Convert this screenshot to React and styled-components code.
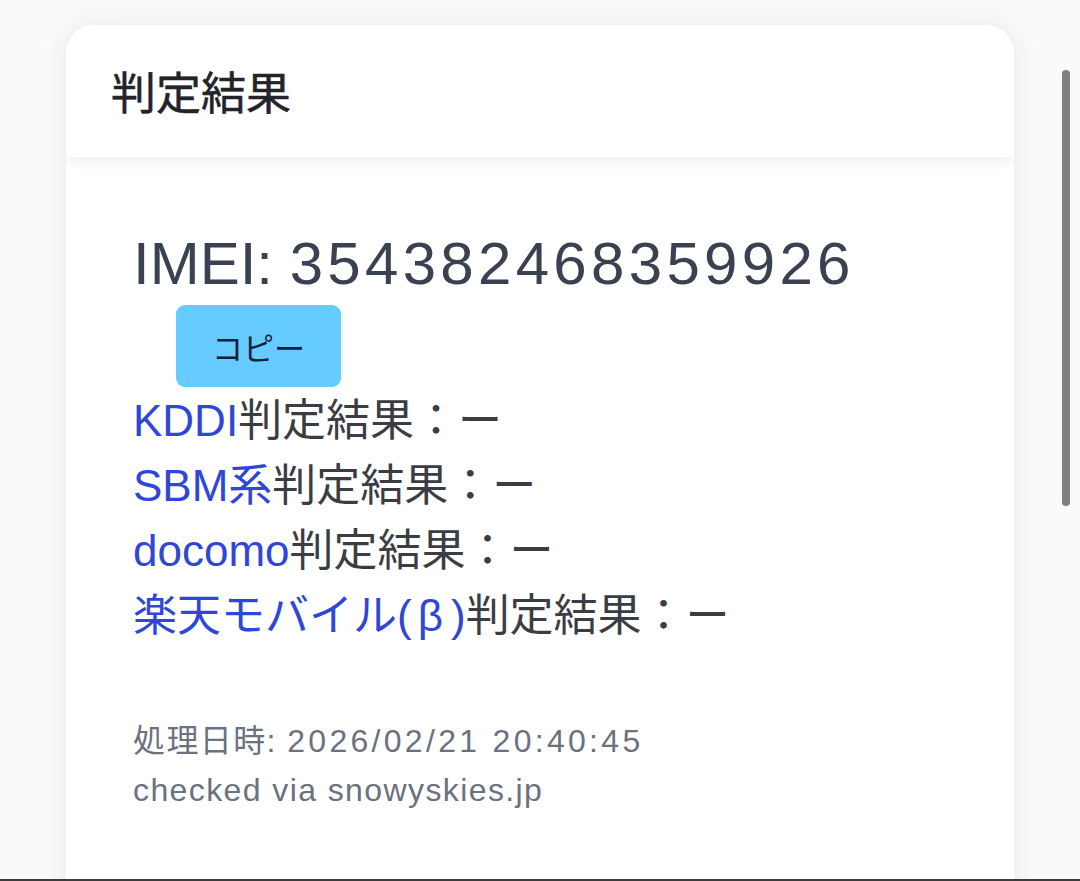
import React from "react";
import styled, { createGlobalStyle } from "styled-components";

const Global = createGlobalStyle`
  html, body {
    margin: 0;
    padding: 0;
    height: 881px;
    overflow: hidden;
    background: #fafafa;
    font-family: "Liberation Sans", "Noto Sans CJK JP", sans-serif;
  }
  #root { height: 881px; }
`;

const Page = styled.div`
  display: flex;
  padding: 25px 66px 0 66px;
  height: 881px;
  box-sizing: border-box;
`;

const Card = styled.section`
  flex: 1;
  height: 1000px;
  background: #ffffff;
  border-radius: 28px;
  box-shadow: 0 0 30px rgba(0, 0, 0, 0.07);
  display: flex;
  flex-direction: column;
  overflow: hidden;
`;

const Header = styled.header`
  height: 132px;
  flex: none;
  display: flex;
  align-items: center;
  padding: 0 45px;
  background: #ffffff;
  box-shadow: 0 4px 14px rgba(0, 0, 0, 0.07);
  position: relative;
  z-index: 1;
`;

const Title = styled.h2`
  margin: 0;
  font-family: "Noto Sans CJK JP", sans-serif;
  font-weight: 400;
  font-size: 45px;
  line-height: 1.2;
  color: #22242a;
  -webkit-text-stroke: 0.5px #22242a;
`;

const Body = styled.div`
  padding: 71px 67px 0 67px;
  display: flex;
  flex-direction: column;
  align-items: flex-start;
`;

const Imei = styled.div`
  font-size: 60px;
  line-height: 72px;
  color: #3a4150;
`;

const Digits = styled.span`
  letter-spacing: 4.3px;
`;

const CopyButton = styled.button`
  margin: 5px 0 0 43px;
  width: 165px;
  height: 82px;
  border: none;
  border-radius: 9px;
  background: #66ccff;
  color: #0f2138;
  font-family: "Noto Sans CJK JP", sans-serif;
  font-size: 31px;
  padding: 0;
  display: flex;
  align-items: center;
  justify-content: center;
`;

const Results = styled.div`
  margin-top: 1px;
  display: flex;
  flex-direction: column;
`;

const Row = styled.div`
  font-size: 44px;
  line-height: 65px;
  color: #3a3d44;
  white-space: nowrap;
`;

const Carrier = styled.span`
  color: #2f47d6;
`;

const Beta = styled.span`
  margin: 0 8px 0 6px;
`;

const Footer = styled.div`
  margin-top: 69px;
  font-size: 32px;
  line-height: 49px;
  color: #6b7180;
  letter-spacing: 1.4px;
`;

const Stamp = styled.span`
  letter-spacing: 3.3px;
`;

const Scrollbar = styled.div`
  position: fixed;
  right: 10px;
  top: 70px;
  width: 8px;
  height: 436px;
  border-radius: 4px;
  background: #808080;
`;

const BottomEdge = styled.div`
  position: fixed;
  left: 0;
  right: 0;
  bottom: 0;
  height: 2px;
  background: #3d3d3d;
`;

const rows = [
  { key: "kddi", carrier: "KDDI" },
  { key: "sbm", carrier: "SBM系" },
  { key: "docomo", carrier: "docomo" },
  {
    key: "rakuten",
    carrier: (
      <>
        楽天モバイル(<Beta>β</Beta>)
      </>
    ),
  },
];

export default function App() {
  return (
    <>
      <Global />
      <Page>
        <Card>
          <Header>
            <Title>判定結果</Title>
          </Header>
          <Body>
            <Imei>
              IMEI: <Digits>354382468359926</Digits>
            </Imei>
            <CopyButton>コピー</CopyButton>
            <Results>
              {rows.map((r) => (
                <Row key={r.key}>
                  <Carrier>{r.carrier}</Carrier>判定結果：ー
                </Row>
              ))}
            </Results>
            <Footer>
              <div>
                処理日時: <Stamp>2026/02/21 20:40:45</Stamp>
              </div>
              <div>checked via snowyskies.jp</div>
            </Footer>
          </Body>
        </Card>
      </Page>
      <Scrollbar />
      <BottomEdge />
    </>
  );
}
